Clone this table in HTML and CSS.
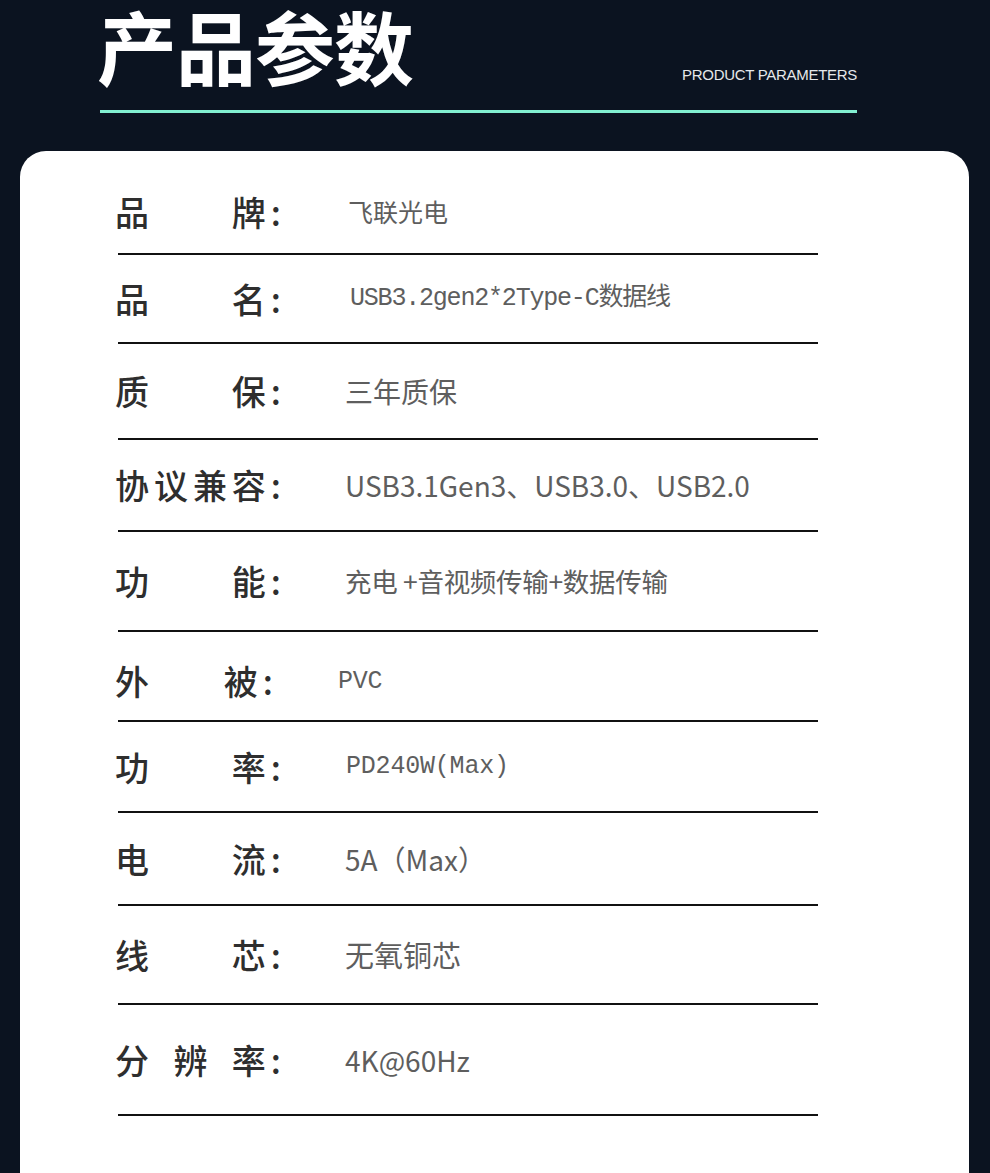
FILE: index.html
```html
<!DOCTYPE html>
<html lang="zh-CN">
<head>
<meta charset="utf-8">
<title>产品参数</title>
<link rel="stylesheet" href="styles.css">
</head>
<body>
<header class="header">
  <div class="header-row">
    <h1 class="title">产品参数</h1>
    <div class="subtitle">PRODUCT PARAMETERS</div>
  </div>
  <div class="accent"></div>
</header>
<main class="card">
  <div class="row r1"><div class="label"><span>品</span><span>牌<span class="colon">:</span></span></div><div class="value v-sm">飞联光电</div></div>
  <div class="row r2"><div class="label"><span>品</span><span>名<span class="colon">:</span></span></div><div class="value mono tight">USB3.2gen2*2Type-C数据线</div></div>
  <div class="row r3"><div class="label"><span>质</span><span>保<span class="colon">:</span></span></div><div class="value v-lg">三年质保</div></div>
  <div class="row r4"><div class="label"><span>协</span><span>议</span><span>兼</span><span>容<span class="colon">:</span></span></div><div class="value v-xl">USB3.1Gen3、USB3.0、USB2.0</div></div>
  <div class="row r5"><div class="label"><span>功</span><span>能<span class="colon">:</span></span></div><div class="value v-md">充电 +音视频传输+数据传输</div></div>
  <div class="row r6"><div class="label narrow"><span>外</span><span>被<span class="colon">:</span></span></div><div class="value mono">PVC</div></div>
  <div class="row r7"><div class="label"><span>功</span><span>率<span class="colon">:</span></span></div><div class="value mono">PD240W(Max)</div></div>
  <div class="row r8"><div class="label"><span>电</span><span>流<span class="colon">:</span></span></div><div class="value v-lg">5A（Max）</div></div>
  <div class="row r9"><div class="label"><span>线</span><span>芯<span class="colon">:</span></span></div><div class="value v-xl2">无氧铜芯</div></div>
  <div class="row r10"><div class="label"><span>分</span><span>辨</span><span>率<span class="colon">:</span></span></div><div class="value v-lg">4K@60Hz</div></div>
</main>
</body>
</html>
```

FILE: styles.css
```css
html, body {
  margin: 0;
  padding: 0;
}
body {
  background: #0b1320;
  font-family: "Noto Sans CJK SC", "Noto Sans", sans-serif;
  width: 990px;
  min-height: 1173px;
  overflow: hidden;
}
.header {
  padding: 0 133px 0 100px;
}
.header-row {
  display: flex;
  justify-content: space-between;
  align-items: flex-end;
  height: 102px;
}
.title {
  margin: 0 0 0 -3px;
  font-size: 80px;
  line-height: 1.1;
  font-weight: 700;
  color: #ffffff;
  letter-spacing: -1px;
  padding-bottom: 14px;
}
.subtitle {
  font-family: "Liberation Sans", "Noto Sans", sans-serif;
  font-size: 15px;
  color: #e6e8ea;
  letter-spacing: -0.3px;
  padding-bottom: 19px;
}
.accent {
  height: 3px;
  background: #82efd1;
  margin-top: 8px;
}
.card {
  margin: 38px 21px 0 20px;
  background: #ffffff;
  border-radius: 26px 26px 0 0;
  padding: 19px 151px 60px 98px;
  min-height: 1000px;
}
.row {
  display: flex;
  align-items: center;
  border-bottom: 2px solid #111111;
  box-sizing: border-box;
}
.r1 { height: 85px; }
.r2 { height: 89px; }
.r3 { height: 96px; }
.r4 { height: 92px; }
.r5 { height: 100px; }
.r6 { height: 90px; padding-top: 10px; }
.r7 { height: 91px; }
.r8 { height: 93px; }
.r9 { height: 99px; }
.r10 { height: 111px; }
.label {
  display: flex;
  justify-content: space-between;
  width: 166px;
  margin-left: -3px;
  font-size: 34px;
  line-height: 1;
  color: #2e2e2e;
  font-weight: 500;
}
.label.narrow {
  width: 158px;
}
.colon {
  margin-left: 5px;
}
.value {
  margin-left: 64px;
  font-size: 25px;
  color: #5e5e5e;
  line-height: 1;
}
.v-sm { font-size: 25px; margin-left: 67px; }
.v-md { font-size: 26.5px; letter-spacing: -0.3px; }
.v-lg { font-size: 28px; }
.v-xl { font-size: 28px; }
.v-xl2 { font-size: 29px; }
.mono {
  font-family: "Liberation Mono", "Noto Sans CJK SC", monospace;
  font-size: 25px;
  letter-spacing: -0.2px;
  margin-left: 65px;
}
.mono.tight {
  letter-spacing: -1.2px;
  margin-left: 69px;
}
```
